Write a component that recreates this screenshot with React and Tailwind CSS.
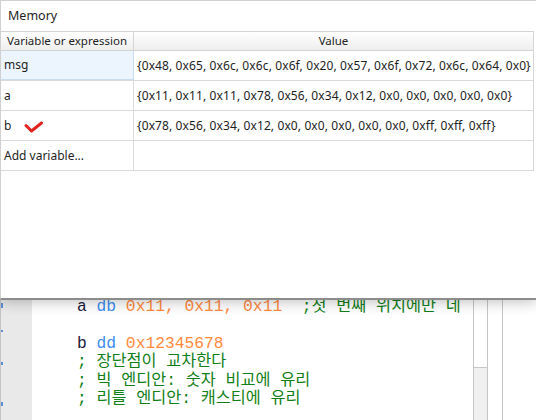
import React from 'react';

const rows = [
    { name: "msg", value: "{0x48, 0x65, 0x6c, 0x6c, 0x6f, 0x20, 0x57, 0x6f, 0x72, 0x6c, 0x64, 0x0}", selected: true },
    { name: "a", value: "{0x11, 0x11, 0x11, 0x78, 0x56, 0x34, 0x12, 0x0, 0x0, 0x0, 0x0, 0x0}" },
    { name: "b", value: "{0x78, 0x56, 0x34, 0x12, 0x0, 0x0, 0x0, 0x0, 0x0, 0xff, 0xff, 0xff}", mark: true },
    { name: "Add variable...", value: "" },
];

const Check = () => (
    <svg width="20" height="12" viewBox="0 0 20 12" className="ml-[13px] mt-[3px]">
        <path d="M2 4.5 L7.5 10 L17.5 2" fill="none" stroke="#e2231f" strokeWidth="3" strokeLinecap="round" strokeLinejoin="round" />
    </svg>
);

const MemoryPanel = () => {
    return (
        <div className="absolute left-0 top-0 w-[536px] h-[300px] bg-white border-t border-l border-[#d0d0d0] border-b-2 border-b-[#8c8c8c] shadow-[0_3px_12px_rgba(0,0,0,0.22)] font-['Noto_Sans',sans-serif] text-[#1e1e1e]">
            <div className="h-[30px] flex items-center pl-[7px] text-[12.5px]">Memory</div>
            <div className="w-[533px] border-r border-[#d6d6d6]">
                <div className="flex h-[20px] border-y border-[#d3d3d3] bg-gradient-to-b from-white to-[#eeeeee] text-[11.5px]">
                    <div className="w-[133px] border-r border-[#d6d6d6] flex items-center justify-center">Variable or expression</div>
                    <div className="flex-1 flex items-center justify-center">Value</div>
                </div>
                {rows.map((r) => (
                    <div key={r.name} className="flex h-[30px] border-b border-[#dadada] text-[12px]">
                        <div className={`w-[133px] flex items-center pl-[3px] ${r.selected ? "bg-[#ecf4fd] border-r border-b border-[#c9ddf2]" : "border-r border-[#dadada]"}`}>
                            {r.name}
                            {r.mark && <Check />}
                        </div>
                        <div className="flex-1 flex items-center pl-[3px] whitespace-nowrap tracking-[0.11px]">{r.value}</div>
                    </div>
                ))}
            </div>
        </div>
    );
};

const K = ({ children }) => <span className="text-[#127f18]">{children}</span>;

const Editor = () => {
    return (
        <div className="flex h-full">
            <div className="w-[32px] h-full bg-[#e9e9e9] border-l border-[#c4c4c4] relative">
                <div className="absolute left-0 top-[303px] w-[2px] h-[5px] bg-[#5b8fd6]" />
                <div className="absolute left-0 top-[330px] w-[2px] h-[2px] bg-[#5b8fd6]" />
                <div className="absolute left-0 top-[362px] w-[2px] h-[3px] bg-[#5b8fd6]" />
                <div className="absolute left-0 top-[402px] w-[2px] h-[4px] bg-[#5b8fd6]" />
            </div>
            <div className="w-[441px] h-full overflow-hidden bg-white pl-[45px] pt-[298px] font-['Liberation_Mono','Noto_Sans_CJK_KR',monospace] text-[16.3px] leading-[18.4px] whitespace-pre">
                <div>
                    <span className="text-[#20203a]">a </span>
                    <span className="text-[#3d8ef2]">db </span>
                    <span className="text-[#ff8a3d]">0x11, 0x11, 0x11</span>
                    <K>  ;첫 번째 위치에만 네</K>
                </div>
                <div> </div>
                <div>
                    <span className="text-[#20203a]">b </span>
                    <span className="text-[#3d8ef2]">dd </span>
                    <span className="text-[#ff8a3d]">0x12345678</span>
                </div>
                <div><K>; 장단점이 교차한다</K></div>
                <div><K>; 빅 엔디안: 숫자 비교에 유리</K></div>
                <div><K>; 리틀 엔디안: 캐스티에 유리</K></div>
            </div>
            <div className="w-[15px] h-full flex flex-col border-x border-[#c6c6c6]">
                <div className="h-[367px] bg-white" />
                <div className="flex-1 bg-[#f0f0f0] border-t border-[#c6c6c6]" />
            </div>
            <div className="w-[15px] h-full bg-white border-r border-[#c6c6c6]" />
            <div className="flex-1 bg-white" />
        </div>
    );
};

export default function App() {
    return (
        <div className="relative w-[536px] h-[420px] overflow-hidden bg-white">
            <Editor />
            <MemoryPanel />
        </div>
    );
}
